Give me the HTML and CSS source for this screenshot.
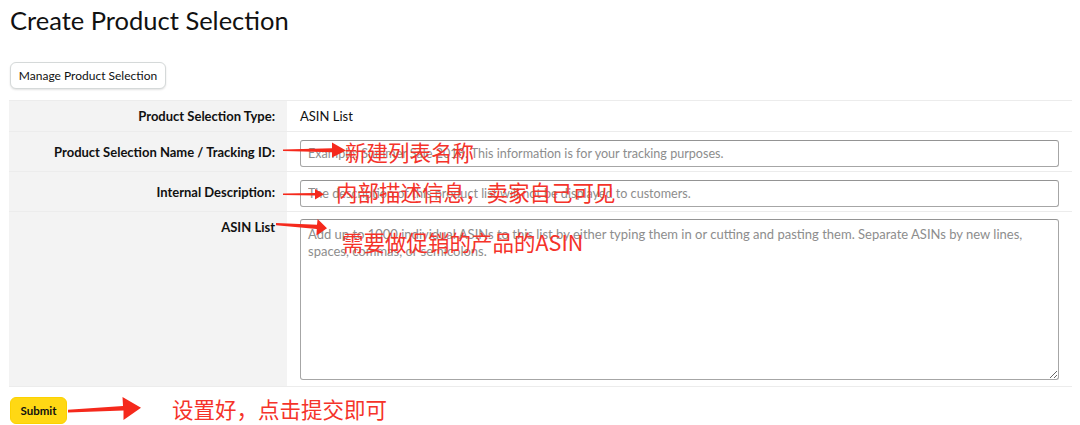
FILE: index.html
```html
<!DOCTYPE html>
<html lang="en">
<head>
<meta charset="UTF-8">
<title>Create Product Selection</title>
<link rel="stylesheet" href="styles.css">
</head>
<body>
<div class="page">
    <h1>Create Product Selection</h1>
    <button type="button" class="btn-manage">Manage Product Selection</button>

    <form class="selection-form">
        <div class="row row-type">
            <div class="label">Product Selection Type:</div>
            <div class="field">ASIN List</div>
        </div>
        <div class="row">
            <label class="label" for="trackingId">Product Selection Name / Tracking ID:</label>
            <div class="field"><input type="text" id="trackingId" placeholder="Example: Summer Sale 2018. This information is for your tracking purposes."></div>
        </div>
        <div class="row">
            <label class="label" for="internalDesc">Internal Description:</label>
            <div class="field"><input type="text" id="internalDesc" placeholder="The description of this product list will not be displayed to customers."></div>
        </div>
        <div class="row row-asin">
            <label class="label" for="asinList">ASIN List</label>
            <div class="field"><textarea id="asinList" placeholder="Add up to 1000 individual ASINs to this list by either typing them in or cutting and pasting them. Separate ASINs by new lines, spaces, commas, or semicolons."></textarea></div>
        </div>
        <button type="button" class="btn-submit">Submit</button>
    </form>

    <!-- notes drawn over the screenshot -->
    <svg class="arrows" width="1080" height="425" viewBox="0 0 1080 425">
        <polygon points="283,149.6 332,148.3 332,142.5 346,150.5 332,157.5 332,152.3 283,151" />
        <polygon points="283,193.6 315,193 315,189 324,194.3 315,199.5 315,195.5 283,195" />
        <polygon points="276,223 317,224.8 317.6,219 327,228.2 316.4,235.5 316.8,229 276,225.3" />
        <polygon points="68,409.8 123,406 122.5,397 141,407.8 123.5,420 123.5,410.5 68,412.6" />
    </svg>
    <span class="note note-name">新建列表名称</span>
    <span class="note note-desc">内部描述信息，卖家自己可见</span>
    <span class="note note-asin">需要做促销的产品的ASIN</span>
    <span class="note note-submit">设置好，点击提交即可</span>
</div>
</body>
</html>
```

FILE: styles.css
```css
body {
    margin: 0;
    font-family: Lato, "Liberation Sans", Arial, sans-serif;
    color: #0f1111;
    background-color: #ffffff;
}

.page {
    position: relative;
    height: 425px;
    padding: 0 9px;
    overflow: hidden;
}

h1 {
    margin: 0;
    padding: 4px 0 0 1px;
    font-size: 25.5px;
    font-weight: 400;
    line-height: 32px;
    color: #111111;
}

.btn-manage {
    display: block;
    margin: 26px 0 0 1px;
    width: 156px;
    height: 27px;
    padding: 0;
    font-family: inherit;
    font-size: 12px;
    color: #0f1111;
    background-color: #ffffff;
    border: 1px solid #d5d9d9;
    border-radius: 6px;
    box-shadow: 0 1px 2px rgba(15, 17, 17, 0.12);
}

.selection-form {
    margin-top: 11px;
}

.row {
    display: flex;
    width: 1063px;
    border-bottom: 1px solid #ececec;
}

.row:first-child {
    border-top: 1px solid #ececec;
}

.label {
    flex: 0 0 266px;
    padding-right: 12px;
    display: flex;
    align-items: center;
    justify-content: flex-end;
    font-size: 13px;
    font-weight: 700;
    color: #111111;
    background-color: #f3f3f3;
}

.field {
    flex: 1;
    padding: 8px 13px 4px 13px;
    font-size: 13px;
}

.row-type .field {
    display: flex;
    align-items: center;
    height: 30px;
    padding: 0 13px;
    box-sizing: border-box;
}

.row-asin .label {
    align-items: flex-start;
    padding-top: 7px;
}

.row-asin .field {
    padding-top: 7px;
    padding-bottom: 6px;
}

input[type="text"],
textarea {
    display: block;
    width: 100%;
    box-sizing: border-box;
    margin: 0;
    font-family: inherit;
    color: #111111;
    background-color: #ffffff;
    border: 1px solid #a6a6a6;
    border-top-color: #949494;
    border-radius: 3px;
}

input[type="text"] {
    height: 27px;
    padding: 0 7px;
    font-size: 12.6px;
}

textarea {
    height: 161px;
    padding: 6px 7px;
    font-size: 13px;
    line-height: 17px;
    resize: vertical;
}

::placeholder {
    color: #8d8d8d;
}

.btn-submit {
    display: block;
    margin: 10px 0 0 1px;
    width: 57px;
    height: 27px;
    padding: 0;
    font-family: inherit;
    font-size: 11.5px;
    font-weight: 700;
    color: #0f1111;
    background-color: #ffd814;
    border: 1px solid #fcd200;
    border-radius: 6px;
}

.arrows {
    position: absolute;
    top: 0;
    left: 0;
    pointer-events: none;
}

.arrows polygon {
    fill: #f5291c;
}

.note {
    position: absolute;
    font-family: "Noto Sans CJK SC", "Noto Sans", sans-serif;
    font-size: 21.5px;
    line-height: 24px;
    color: #f5332a;
    white-space: nowrap;
}

.note-name {
    left: 345px;
    top: 140px;
}

.note-desc {
    left: 336px;
    top: 180px;
}

.note-asin {
    left: 342px;
    top: 230px;
}

.note-submit {
    left: 172px;
    top: 397px;
}
```
